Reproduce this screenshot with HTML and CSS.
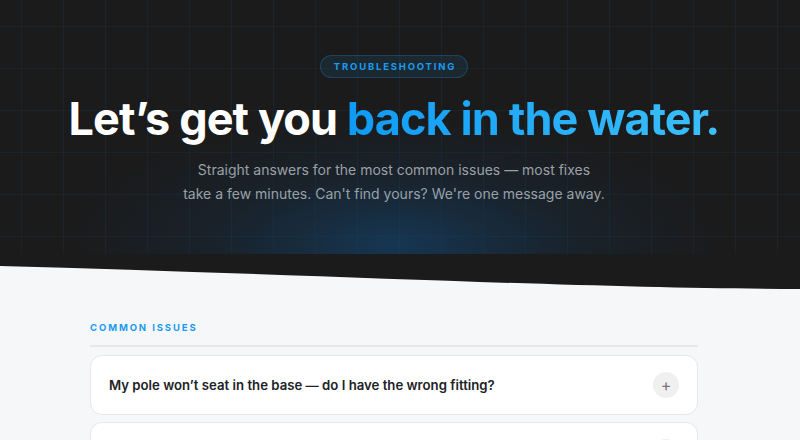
FILE: index.html
```html
<!DOCTYPE html>
<html lang="en">

<head>
    <meta charset="UTF-8">
    <meta name="viewport" content="width=device-width, initial-scale=1.0">
    <title>Troubleshooting</title>
    <link rel="stylesheet" href="styles.css">
</head>

<body>
    <section class="hero">
        <div class="inner">
            <span class="badge">TROUBLESHOOTING</span>
            <h1>Let’s get you <span class="accent">back in the water.</span></h1>
            <p class="lead">Straight answers for the most common issues — most fixes<br>
                take a few minutes. Can't find yours? We're one message away.</p>
        </div>
    </section>

    <svg class="wave" viewBox="0 0 800 36" preserveAspectRatio="none">
        <path d="M0 0 H800 V35 C600 35 300 20 0 12 Z" fill="#1b1b1b" />
    </svg>

    <main class="faq">
        <div class="inner">
            <h2 class="label">COMMON ISSUES</h2>
            <div class="list">
                <div class="item">
                    <span>My pole won’t seat in the base — do I have the wrong fitting?</span>
                    <button class="toggle">+</button>
                </div>
                <div class="item">
                    <span>My board feels unstable when I stand up</span>
                    <button class="toggle">+</button>
                </div>
            </div>
        </div>
    </main>
</body>

</html>
```

FILE: styles.css
```css
* {
    margin: 0px;
    padding: 0px;
    box-sizing: border-box;
}

body {
    background-color: #f6f7f9;
    font-family: Inter, "Noto Sans", sans-serif;
    overflow: hidden;
}

.inner {
    width: 788px;
}

.hero {
    height: 254px;
    background-color: #1b1b1b;
    background-image:
        radial-gradient(ellipse 330px 130px at 394px 245px, rgba(18, 72, 118, 0.6), rgba(18, 58, 96, 0.22) 55%, transparent 100%),
        linear-gradient(rgba(30, 90, 130, 0.13) 1px, transparent 1px),
        linear-gradient(90deg, rgba(30, 90, 130, 0.13) 1px, transparent 1px);
    background-size: auto, 42px 42px, 42px 42px;
    background-position: 0 0, 21px 26px, 21px 26px;
}

.hero .inner {
    display: flex;
    flex-direction: column;
    align-items: center;
    padding-top: 55px;
}

.badge {
    font-size: 9.5px;
    font-weight: 700;
    letter-spacing: 1.8px;
    color: #1a9bf0;
    padding: 5px 11px 5px 13px;
    border-radius: 12px;
    background-color: rgba(26, 155, 240, 0.1);
    border: 1px solid rgba(26, 155, 240, 0.25);
}

h1 {
    margin-top: 13px;
    font-size: 45px;
    font-weight: 700;
    letter-spacing: -0.9px;
    color: #ffffff;
    line-height: 56px;
}

.accent {
    background: linear-gradient(90deg, #0f9af5, #3cc0fb);
    -webkit-background-clip: text;
    background-clip: text;
    color: transparent;
}

.lead {
    margin-top: 11px;
    text-align: center;
    font-size: 14px;
    line-height: 24px;
    color: #9aa0a7;
}

.wave {
    display: block;
    width: 100%;
    height: 36px;
}

.faq .inner {
    padding: 32px 90px 0 90px;
}

.label {
    font-size: 9.5px;
    font-weight: 700;
    letter-spacing: 1.9px;
    color: #1a9bf0;
    padding-bottom: 12px;
    border-bottom: 2px solid #e6e7ea;
}

.list {
    display: flex;
    flex-direction: column;
    gap: 7px;
    margin-top: 8px;
}

.item {
    display: flex;
    justify-content: space-between;
    align-items: center;
    height: 60px;
    padding: 0 18px 0 18px;
    background-color: #ffffff;
    border: 1px solid #e6e7ea;
    border-radius: 12px;
    font-size: 13.2px;
    font-weight: 600;
    color: #202226;
}

.toggle {
    width: 26px;
    height: 26px;
    border-radius: 50%;
    border: none;
    background-color: #f0f0f1;
    color: #777;
    font-size: 16px;
    font-family: Inter, sans-serif;
    line-height: 26px;
    cursor: pointer;
}
```
